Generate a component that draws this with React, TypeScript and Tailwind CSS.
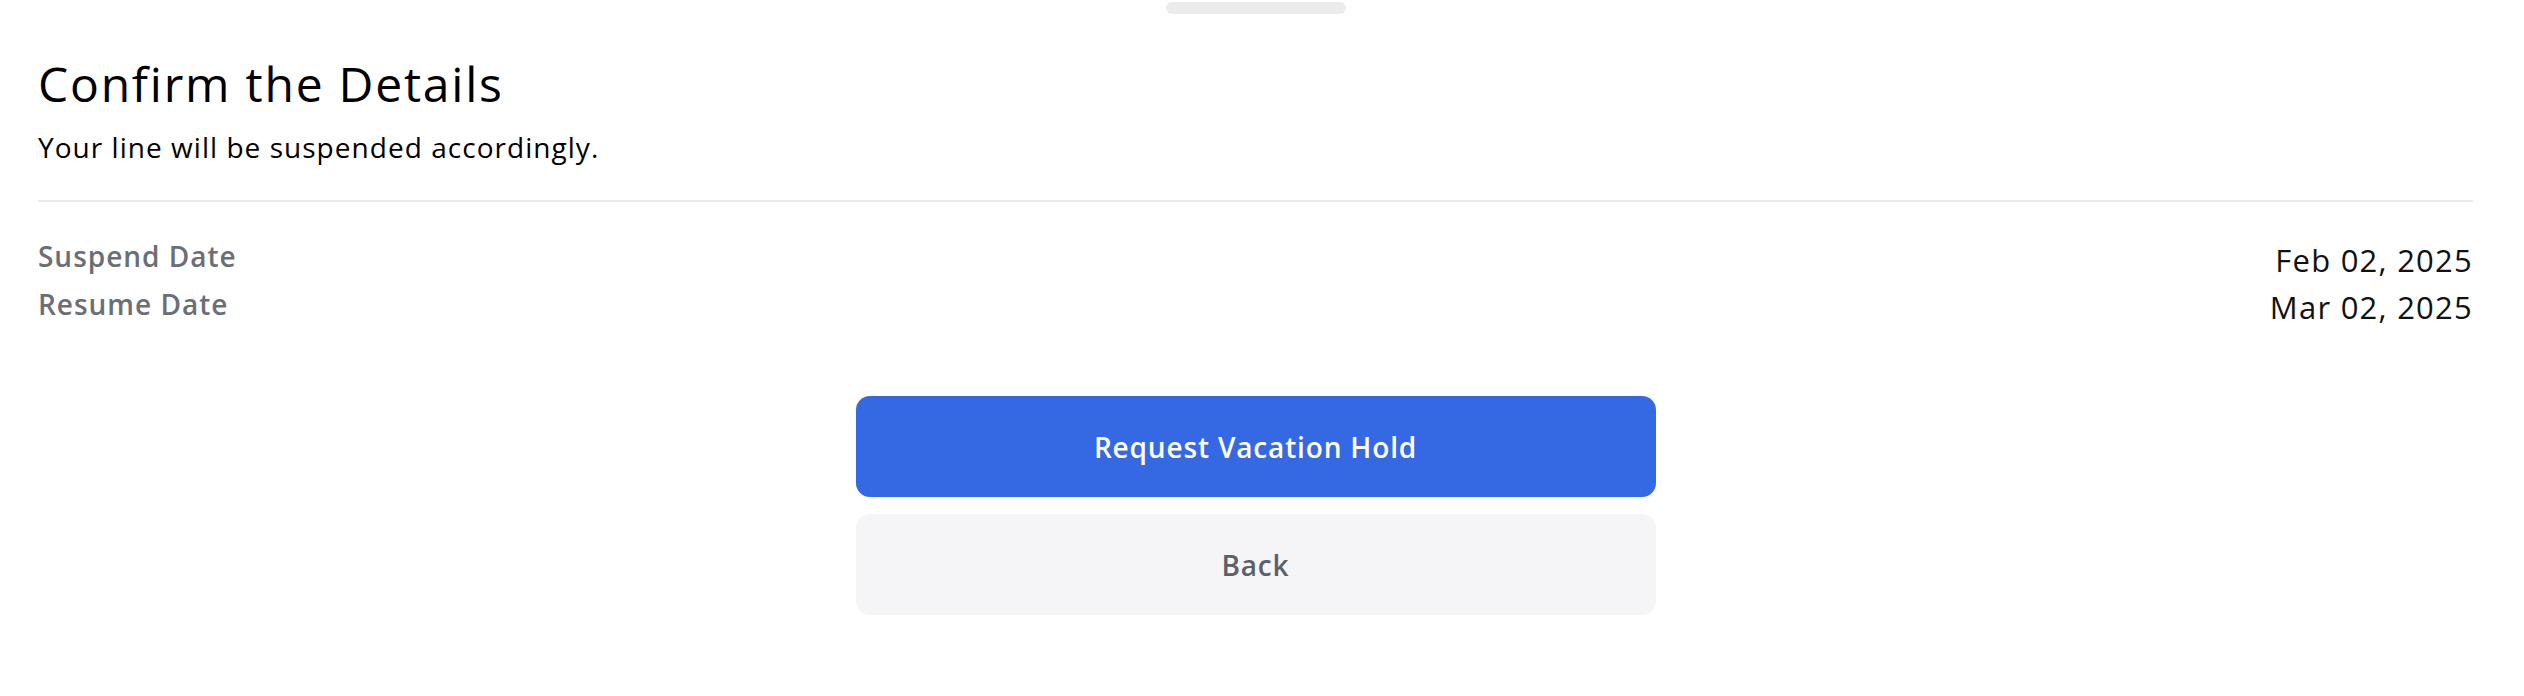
import React from 'react';

const rows = [
  { label: 'Suspend Date', value: 'Feb 02, 2025' },
  { label: 'Resume Date', value: 'Mar 02, 2025' },
];

export default function App() {
  return (
    <div className="min-h-[696px] w-full bg-white pl-[38px] pr-[51px] font-['Open_Sans',sans-serif] text-black">
      {/* drag handle */}
      <div className="flex justify-center pt-[2px]">
        <div className="h-3 w-[180px] rounded-full bg-[#ebebeb]" />
      </div>

      <h1 className="mt-[42px] text-[48px] leading-[56px] font-medium tracking-[0.037em]">Confirm the Details</h1>
      <p className="mt-[17px] text-[28px] leading-[36px] tracking-[0.037em]">Your line will be suspended accordingly.</p>

      <div className="mt-[35px] border-t-2 border-[#ebebeb]" />

      <div className="mt-[30px] flex items-start justify-between">
        <div className="flex flex-col">
          {rows.map((r) => (
            <span key={r.label} className="text-[28px] leading-[48px] font-semibold tracking-[0.035em] text-[#6b6e75]">
              {r.label}
            </span>
          ))}
        </div>
        <div className="mt-[5px] flex flex-col items-end">
          {rows.map((r) => (
            <span key={r.value} className="text-[31px] leading-[47px] font-medium tracking-[0.04em] text-[#111]">
              {r.value}
            </span>
          ))}
        </div>
      </div>

      <div className="mx-auto mt-[65px] flex w-[800px] flex-col gap-[17px]">
        <button className="h-[101px] rounded-[14px] bg-[#3568e3] text-[28px] font-semibold tracking-[0.03em] text-white">
          Request Vacation Hold
        </button>
        <button className="h-[101px] rounded-[14px] bg-[#f5f5f7] text-[28px] font-semibold tracking-[0.03em] text-[#5c6068]">
          Back
        </button>
      </div>
    </div>
  );
}
